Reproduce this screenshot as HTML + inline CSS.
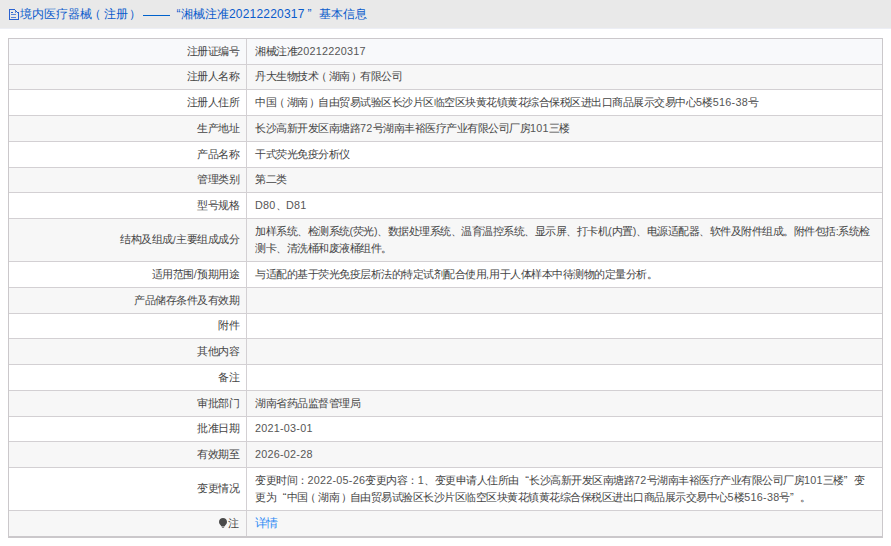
<!DOCTYPE html>
<html><head><meta charset="utf-8"><style>
html,body{margin:0;padding:0;background:#fff;width:891px;height:546px;overflow:hidden;position:relative;font-family:"Liberation Sans",sans-serif;}
.hdr{position:absolute;left:0;top:0;width:891px;height:28px;background:#e9e9e9;border-bottom:1px solid #eceef5;}
.ttl{position:absolute;left:19.5px;top:6px;font-size:12px;letter-spacing:0;line-height:17px;color:#0a5bcc;white-space:nowrap;}
.ttl .ql,.ttl .qr{width:12px}
.ico{position:absolute;left:9px;top:9px;}
.ttl .a{font-size:12px;letter-spacing:0.2px;color:#0a5bcc}
.dash{position:absolute;left:143px;top:15px;width:26.5px;height:1px;background:#0062cc;}
.row{position:absolute;left:8px;width:874px;}
.row:after{content:"";position:absolute;left:0;right:0;top:0;height:1px;background:#d3d0d3;}
.lab{position:absolute;left:0;width:238px;top:0;bottom:0;display:flex;align-items:center;justify-content:flex-end;padding-right:7px;box-sizing:border-box;font-size:11px;letter-spacing:-0.5px;color:#444;white-space:nowrap;}
.val{position:absolute;left:239px;right:0;top:0;bottom:0;display:flex;align-items:center;padding-left:8px;box-sizing:border-box;font-size:11px;letter-spacing:-0.5px;line-height:17px;color:#444;white-space:nowrap;}
.a{font-size:10.8px;letter-spacing:0.25px;color:#555;}
.ql,.qr{display:inline-block;width:10.5px;letter-spacing:0;}
.ql{text-align:right} .qr{text-align:left}
.vline{position:absolute;left:246px;top:38px;width:1px;height:499px;background:#d3d0d3;}
.border{position:absolute;left:8px;top:38px;width:873px;height:497px;border:1px solid #cbc8cb;border-bottom-width:2px;}
.lnk{color:#2d8af5;font-size:12px;letter-spacing:-1px;}
.p{letter-spacing:-0.2px}
.lp{position:relative;left:-2.5px} .rp{position:relative;left:1.5px}
.bulb{margin-right:1px;margin-top:-1px}
</style></head><body>
<div class="hdr"><svg class="ico" width="10" height="11" viewBox="0 0 10 11" shape-rendering="crispEdges"><g fill="#2a62d0"><rect x="0" y="0" width="1" height="11"/><rect x="0" y="10" width="10" height="1"/><rect x="9" y="3" width="1" height="8"/><rect x="0" y="0" width="6" height="1"/><rect x="6" y="1" width="1" height="1"/><rect x="7" y="2" width="1" height="1"/><rect x="8" y="3" width="1" height="1"/><rect x="6" y="2" width="1" height="2" opacity="0.7"/><rect x="2" y="3" width="2" height="1"/><rect x="2" y="5" width="5" height="1" opacity="0.75"/><rect x="2" y="8" width="5" height="1" opacity="0.75"/></g></svg><div class="ttl" style="left:19.5px">境内医疗器械<span class="lp">（</span>注册<span class="rp">）</span></div><div class="dash"></div><div class="ttl q" style="left:176.5px">“</div><div class="ttl" style="left:181px">湘械注准<span class="a">20212220317</span></div><div class="ttl q" style="left:307.5px">”</div><div class="ttl" style="left:318.8px">基本信息</div></div>
<div class="row" style="top:38.00px;height:26.00px;background:#f8f9fb"><div class="lab">注册证编号</div><div class="val"><div>湘械注准<span class="a">20212220317</span></div></div></div>
<div class="row" style="top:64.00px;height:25.00px;background:#f7f7f7"><div class="lab">注册人名称</div><div class="val"><div>丹大生物技术<span class="lp">（</span>湖南<span class="rp">）</span>有限公司</div></div></div>
<div class="row" style="top:89.00px;height:26.00px;background:#ffffff"><div class="lab">注册人住所</div><div class="val"><div>中国<span class="lp">（</span>湖南<span class="rp">）</span>自由贸易试验区长沙片区临空区块黄花镇黄花综合保税区进出口商品展示交易中心<span class="a">5</span>楼<span class="a">516-38</span>号</div></div></div>
<div class="row" style="top:115.00px;height:26.00px;background:#f7f7f7"><div class="lab">生产地址</div><div class="val"><div>长沙高新开发区南塘路<span class="a">72</span>号湖南丰裕医疗产业有限公司厂房<span class="a">101</span>三楼</div></div></div>
<div class="row" style="top:141.00px;height:26.00px;background:#ffffff"><div class="lab">产品名称</div><div class="val"><div>干式荧光免疫分析仪</div></div></div>
<div class="row" style="top:167.00px;height:25.00px;background:#f7f7f7"><div class="lab">管理类别</div><div class="val"><div>第二类</div></div></div>
<div class="row" style="top:192.00px;height:26.00px;background:#ffffff"><div class="lab">型号规格</div><div class="val"><div><span class="a">D80</span>、<span class="a">D81</span></div></div></div>
<div class="row" style="top:218.00px;height:43.00px;background:#f7f7f7"><div class="lab">结构及组成<span class="a">/</span>主要组成成分</div><div class="val"><div>加样系统、检测系统<span class="a"><span class="p">(</span></span>荧光<span class="a"><span class="p">)</span></span>、数据处理系统、温育温控系统、显示屏、打卡机<span class="a"><span class="p">(</span></span>内置<span class="a"><span class="p">)</span></span>、电源适配器、软件及附件组成。附件包括<span class="a"><span class="p">:</span></span>系统检<br>测卡、清洗桶和废液桶组件。</div></div></div>
<div class="row" style="top:261.00px;height:26.00px;background:#ffffff"><div class="lab">适用范围<span class="a">/</span>预期用途</div><div class="val"><div>与适配的基于荧光免疫层析法的特定试剂配合使用<span class="a">,</span>用于人体样本中待测物的定量分析。</div></div></div>
<div class="row" style="top:287.00px;height:26.00px;background:#f7f7f7"><div class="lab">产品储存条件及有效期</div><div class="val"><div></div></div></div>
<div class="row" style="top:313.00px;height:25.00px;background:#ffffff"><div class="lab">附件</div><div class="val"><div></div></div></div>
<div class="row" style="top:338.00px;height:26.00px;background:#f7f7f7"><div class="lab">其他内容</div><div class="val"><div></div></div></div>
<div class="row" style="top:364.00px;height:26.00px;background:#ffffff"><div class="lab">备注</div><div class="val"><div></div></div></div>
<div class="row" style="top:390.00px;height:26.00px;background:#f7f7f7"><div class="lab">审批部门</div><div class="val"><div>湖南省药品监督管理局</div></div></div>
<div class="row" style="top:416.00px;height:25.00px;background:#ffffff"><div class="lab">批准日期</div><div class="val"><div><span class="a">2021-03-01</span></div></div></div>
<div class="row" style="top:441.00px;height:26.00px;background:#f7f7f7"><div class="lab">有效期至</div><div class="val"><div><span class="a">2026-02-28</span></div></div></div>
<div class="row" style="top:467.00px;height:43.00px;background:#ffffff"><div class="lab">变更情况</div><div class="val"><div>变更时间：<span class="a">2022-05-26</span>变更内容：<span class="a">1</span>、变更申请人住所由<span class="ql">“</span>长沙高新开发区南塘路<span class="a">72</span>号湖南丰裕医疗产业有限公司厂房<span class="a">101</span>三楼<span class="qr">”</span>变<br>更为<span class="ql">“</span>中国<span class="lp">（</span>湖南<span class="rp">）</span>自由贸易试验区长沙片区临空区块黄花镇黄花综合保税区进出口商品展示交易中心<span class="a">5</span>楼<span class="a">516-38</span>号<span class="qr">”</span>。</div></div></div>
<div class="row" style="top:510.00px;height:26.00px;background:#f7f7f7"><div class="lab" style="padding-right:8px"><svg class="bulb" width="8" height="10" viewBox="0 0 8 10"><path d="M4 0C1.8 0 0 1.7 0 3.9 0 5.6 1.3 6.7 2.6 8.4H5.4C6.7 6.7 8 5.6 8 3.9 8 1.7 6.2 0 4 0Z" fill="#4a4a4a"/><rect x="2.9" y="8.7" width="2.2" height="1.3" fill="#888"/></svg>注</div><div class="val"><div><span class="lnk">详情</span></div></div></div>
<div class="vline"></div>
<div class="border"></div>
</body></html>
